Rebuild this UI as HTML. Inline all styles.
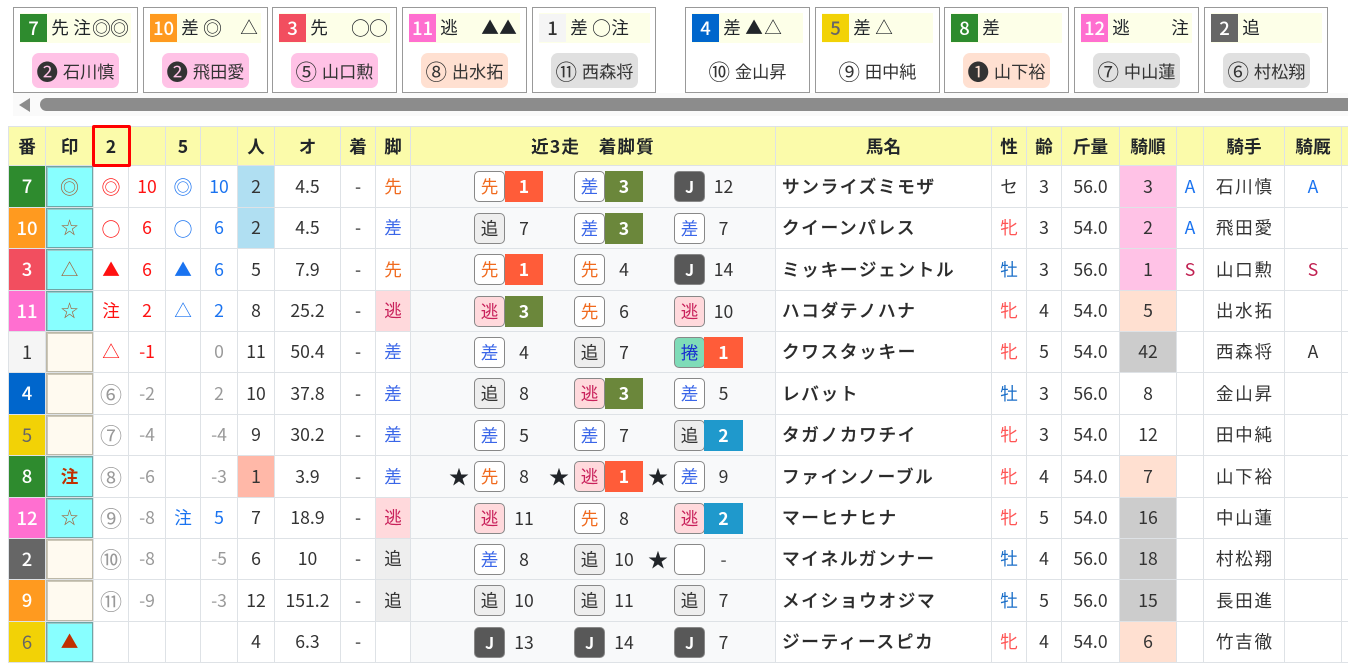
<!DOCTYPE html>
<html lang="ja"><head><meta charset="utf-8"><title>出馬表</title>
<style>
html,body{margin:0;padding:0;width:1348px;height:669px;overflow:hidden;background:#fff;color:#212529;font-family:"Noto Sans CJK JP","Liberation Sans",sans-serif;font-size:17.6px}
.c{position:absolute;top:7px;height:84px;width:123px;border:1px solid #999;background:#fff}
.y{position:absolute;left:6px;top:5px;width:111px;height:30px;background:#fdffe8}
.w{position:absolute;left:6px;top:6px;width:27px;height:28px;line-height:28px;text-align:center;color:#fff;font-size:18.5px;font-weight:500}
.c s{position:absolute;top:6px;text-decoration:none;font-size:17.6px;line-height:28px;width:18px;text-align:center}
.c s.ci{font-size:19px}
.s1{left:37px}.s2{left:59px}.s3{left:78px}.s4{left:96px}
.p{position:absolute;top:45px;height:35px;width:87px;left:18px;border-radius:7px;line-height:35px;text-align:center;font-size:17.2px;white-space:nowrap;color:#333}
.p span{font-size:21.5px;line-height:1;vertical-align:-2px;margin-right:1px}
.k1{background:#ffc2e6}.k2{background:#ffe0d1}.k3{background:#e0e0e0}
#sb{position:absolute;left:13px;top:93px;width:1335px;height:23px;background:#fafafa}
#sb i{position:absolute;left:27px;top:5px;height:13px;width:1320px;background:#8c8c8c;border-radius:7px 0 0 7px}
#sb b{position:absolute;left:6px;top:5px;width:0;height:0;border-top:7px solid transparent;border-bottom:7px solid transparent;border-right:11px solid #8c8c8c}
table{position:absolute;left:8px;top:126px;border-collapse:collapse;table-layout:fixed;width:1392px}
td,th{border:1px solid #dee2e6;padding:0;text-align:center;line-height:1;white-space:nowrap;position:relative;color:#333;font-weight:400}
th{background:#fbfbaa;font-weight:700;color:#212529;height:37px;padding-top:1px;font-size:17.6px}
.n1{background:#f5f5f5;color:#333}.n2{background:#666;color:#fff}.n3{background:#f24e5f;color:#fff}.n4{background:#06c;color:#fff}.n5{background:#f2d206;color:#666}.n6{background:#2e8b2e;color:#fff}.n7{background:#ff9a1f;color:#fff}.n8{background:#ff6fd0;color:#fff}
td.n{font-weight:500;color:#fff;font-size:18.5px}td.n1{color:#333;font-weight:400}td.n5{color:#666;font-weight:400}
.mk div{position:absolute;left:0;right:0;top:0;bottom:0;background:#88ffff;box-shadow:inset 0 0 0 1px #6fa5a5,inset 1px 1px 0 1px #9cc;display:flex;align-items:center;justify-content:center;color:#a0623c}
.mk div.e{background:#fffaf0;box-shadow:inset 0 0 0 1px #bdb8a8,inset 1px 1px 0 1px #ccc7b8}
.mk div.ci{font-size:19px}
td.ci{font-size:19px}
td.cc{font-size:22px}
.r{color:#f11}.bl{color:#1a73f0}.gy{color:#999}
.lf{color:#f06a1e}.lz{color:#3a66e8}.lg{background:#ffd9dc;color:#c8205a}.lt{background:#eee;color:#333}
.pb{background:#b0dff2}.pr{background:#ffb8a8}
.o{background:#f8f9fa}
.b,.h,.q,.st{position:absolute;font-style:normal;text-decoration:none}
.b{top:5px;width:29px;height:29px;border:1px solid #888;border-radius:5px;background:#fff;line-height:29px;text-align:center;font-size:17.6px}
.b.f{color:#f06a1e}.b.z{color:#3a66e8}.b.g{background:#ffd9dc;color:#c8205a}.b.t{background:#eee;color:#333}.b.j{background:#585858;color:#fff;font-weight:700;font-size:16px}.b.m{background:#7fdcb8;color:#1a2fd0}
.a1{left:63px}.a2{left:163px}.a3{left:263px}
.h,.q{top:5px;height:31px;line-height:31px;text-align:center;width:38px;font-size:17.6px}
.u1{left:94px}.u2{left:194px}.u3{left:293px;width:39px}
.h{color:#fff;font-weight:700}.hr{background:#ff5c39}.hg{background:#6b873b}.hb{background:#1f99cc}
.st{top:8px;font-size:20px;line-height:24px;color:#212529;width:22px;text-align:center}
.t1{left:37px}.t2{left:137px}.t3{left:236px}
.nm{text-align:left;padding-left:6px;font-weight:500;letter-spacing:1.7px;font-size:17.6px;color:#2b2b2b;-webkit-text-stroke:.25px #2b2b2b}
.jk{letter-spacing:1.7px;padding-left:1.7px}
.fx{color:#f55}.mx{color:#1a6ec8}
.z1{background:#ffc2e6}.z2{background:#ffe0d1}.z3{background:#ccc}
.ca{color:#1a73f0}.cs{color:#c01f50}
.wd{letter-spacing:1.1px}
#red{position:absolute;left:92px;top:125px;width:33px;height:36px;border:3px solid #f00;border-radius:2px}
</style></head><body>

<div class="c" style="left:13px"><div class="y"></div><div class="w n6">7</div><s class="s1">先</s><s class="s2">注</s><s class="s3 ci">◎</s><s class="s4 ci">◎</s><div class="p k1"><span>❷</span> 石川慎</div></div>
<div class="c" style="left:143px"><div class="y"></div><div class="w n7">10</div><s class="s1">差</s><s class="s2 ci">◎</s><s class="s4">△</s><div class="p k1"><span>❷</span> 飛田愛</div></div>
<div class="c" style="left:272px"><div class="y"></div><div class="w n3">3</div><s class="s1">先</s><s class="s3 ci">○</s><s class="s4 ci">○</s><div class="p k1"><span>⑤</span> 山口勲</div></div>
<div class="c" style="left:402px"><div class="y"></div><div class="w n8">11</div><s class="s1">逃</s><s class="s3">▲</s><s class="s4">▲</s><div class="p k2"><span>⑧</span> 出水拓</div></div>
<div class="c" style="left:532px;width:122px"><div class="y"></div><div class="w n1">1</div><s class="s1">差</s><s class="s2 ci">○</s><s class="s3">注</s><div class="p k3"><span>⑪</span> 西森将</div></div>
<div class="c" style="left:685px"><div class="y"></div><div class="w n4">4</div><s class="s1">差</s><s class="s2">▲</s><s class="s3">△</s><div class="p"><span>⑩</span> 金山昇</div></div>
<div class="c" style="left:815px"><div class="y"></div><div class="w n5">5</div><s class="s1">差</s><s class="s2">△</s><div class="p"><span>⑨</span> 田中純</div></div>
<div class="c" style="left:944px"><div class="y"></div><div class="w n6">8</div><s class="s1">差</s><div class="p k2"><span>❶</span> 山下裕</div></div>
<div class="c" style="left:1074px"><div class="y"></div><div class="w n8">12</div><s class="s1">逃</s><s class="s4">注</s><div class="p k3"><span>⑦</span> 中山蓮</div></div>
<div class="c" style="left:1204px;width:122px"><div class="y"></div><div class="w n2">2</div><s class="s1">追</s><div class="p k3"><span>⑥</span> 村松翔</div></div>

<div id="sb"><b></b><i></i></div>

<table>
<colgroup><col style="width:37px"><col style="width:48px"><col style="width:35px"><col style="width:37px"><col style="width:35px"><col style="width:37px"><col style="width:37px"><col style="width:66px"><col style="width:35px"><col style="width:35px"><col style="width:365px"><col style="width:216px"><col style="width:35px"><col style="width:35px"><col style="width:58px"><col style="width:57px"><col style="width:27px"><col style="width:81px"><col style="width:57px"><col style="width:59px"></colgroup>
<tr><th>番</th><th>印</th><th>2</th><th></th><th>5</th><th></th><th>人</th><th>オ</th><th>着</th><th>脚</th><th class="wd">近3走　着脚質</th><th>馬名</th><th>性</th><th>齢</th><th>斤量</th><th>騎順</th><th></th><th>騎手</th><th>騎厩</th><th></th></tr>

<tr style="height:42px"><td class="n n6">7</td><td class="mk"><div class="ci">◎</div></td><td class="r ci">◎</td><td class="r">10</td><td class="bl ci">◎</td><td class="bl">10</td><td class="pb">2</td><td>4.5</td><td>-</td><td class="lf">先</td><td class="o"><i class="b f a1">先</i><u class="h hr u1">1</u><i class="b z a2">差</i><u class="h hg u2">3</u><i class="b j a3">J</i><u class="q u3">12</u></td><td class="nm">サンライズミモザ</td><td>セ</td><td>3</td><td>56.0</td><td class="z1">3</td><td class="ca">A</td><td class="jk">石川慎</td><td class="ca">A</td><td></td></tr>

<tr style="height:41px"><td class="n n7">10</td><td class="mk"><div>☆</div></td><td class="r ci">○</td><td class="r">6</td><td class="bl ci">○</td><td class="bl">6</td><td class="pb">2</td><td>4.5</td><td>-</td><td class="lz">差</td><td class="o"><i class="b t a1">追</i><u class="q u1">7</u><i class="b z a2">差</i><u class="h hg u2">3</u><i class="b z a3">差</i><u class="q u3">7</u></td><td class="nm">クイーンパレス</td><td class="fx">牝</td><td>3</td><td>54.0</td><td class="z1">2</td><td class="ca">A</td><td class="jk">飛田愛</td><td></td><td></td></tr>

<tr style="height:42px"><td class="n n3">3</td><td class="mk"><div>△</div></td><td class="r">▲</td><td class="r">6</td><td class="bl">▲</td><td class="bl">6</td><td>5</td><td>7.9</td><td>-</td><td class="lf">先</td><td class="o"><i class="b f a1">先</i><u class="h hr u1">1</u><i class="b f a2">先</i><u class="q u2">4</u><i class="b j a3">J</i><u class="q u3">14</u></td><td class="nm">ミッキージェントル</td><td class="mx">牡</td><td>3</td><td>56.0</td><td class="z1">1</td><td class="cs">S</td><td class="jk">山口勲</td><td class="cs">S</td><td></td></tr>

<tr style="height:41px"><td class="n n8">11</td><td class="mk"><div>☆</div></td><td class="r">注</td><td class="r">2</td><td class="bl">△</td><td class="bl">2</td><td>8</td><td>25.2</td><td>-</td><td class="lg">逃</td><td class="o"><i class="b g a1">逃</i><u class="h hg u1">3</u><i class="b f a2">先</i><u class="q u2">6</u><i class="b g a3">逃</i><u class="q u3">10</u></td><td class="nm">ハコダテノハナ</td><td class="fx">牝</td><td>4</td><td>54.0</td><td class="z2">5</td><td></td><td class="jk">出水拓</td><td></td><td></td></tr>

<tr style="height:41px"><td class="n n1">1</td><td class="mk"><div class="e"></div></td><td class="r">△</td><td class="r">-1</td><td></td><td class="gy">0</td><td>11</td><td>50.4</td><td>-</td><td class="lz">差</td><td class="o"><i class="b z a1">差</i><u class="q u1">4</u><i class="b t a2">追</i><u class="q u2">7</u><i class="b m a3">捲</i><u class="h hr u3">1</u></td><td class="nm">クワスタッキー</td><td class="fx">牝</td><td>5</td><td>54.0</td><td class="z3">42</td><td></td><td class="jk">西森将</td><td>A</td><td></td></tr>

<tr style="height:42px"><td class="n n4">4</td><td class="mk"><div class="e"></div></td><td class="gy cc">⑥</td><td class="gy">-2</td><td></td><td class="gy">2</td><td>10</td><td>37.8</td><td>-</td><td class="lz">差</td><td class="o"><i class="b t a1">追</i><u class="q u1">8</u><i class="b g a2">逃</i><u class="h hg u2">3</u><i class="b z a3">差</i><u class="q u3">5</u></td><td class="nm">レバット</td><td class="mx">牡</td><td>3</td><td>56.0</td><td>8</td><td></td><td class="jk">金山昇</td><td></td><td></td></tr>

<tr style="height:41px"><td class="n n5">5</td><td class="mk"><div class="e"></div></td><td class="gy cc">⑦</td><td class="gy">-4</td><td></td><td class="gy">-4</td><td>9</td><td>30.2</td><td>-</td><td class="lz">差</td><td class="o"><i class="b z a1">差</i><u class="q u1">5</u><i class="b z a2">差</i><u class="q u2">7</u><i class="b t a3">追</i><u class="h hb u3">2</u></td><td class="nm">タガノカワチイ</td><td class="fx">牝</td><td>3</td><td>54.0</td><td>12</td><td></td><td class="jk">田中純</td><td></td><td></td></tr>

<tr style="height:42px"><td class="n n6">8</td><td class="mk"><div style="color:#c03000;font-weight:700">注</div></td><td class="gy cc">⑧</td><td class="gy">-6</td><td></td><td class="gy">-3</td><td class="pr">1</td><td>3.9</td><td>-</td><td class="lz">差</td><td class="o"><em class="st t1">★</em><i class="b f a1">先</i><u class="q u1">8</u><em class="st t2">★</em><i class="b g a2">逃</i><u class="h hr u2">1</u><em class="st t3">★</em><i class="b z a3">差</i><u class="q u3">9</u></td><td class="nm">ファインノーブル</td><td class="fx">牝</td><td>4</td><td>54.0</td><td class="z2">7</td><td></td><td class="jk">山下裕</td><td></td><td></td></tr>

<tr style="height:41px"><td class="n n8">12</td><td class="mk"><div>☆</div></td><td class="gy cc">⑨</td><td class="gy">-8</td><td class="bl">注</td><td class="bl">5</td><td>7</td><td>18.9</td><td>-</td><td class="lg">逃</td><td class="o"><i class="b g a1">逃</i><u class="q u1">11</u><i class="b f a2">先</i><u class="q u2">8</u><i class="b g a3">逃</i><u class="h hb u3">2</u></td><td class="nm">マーヒナヒナ</td><td class="fx">牝</td><td>5</td><td>54.0</td><td class="z3">16</td><td></td><td class="jk">中山蓮</td><td></td><td></td></tr>

<tr style="height:41px"><td class="n n2">2</td><td class="mk"><div class="e"></div></td><td class="gy cc">⑩</td><td class="gy">-8</td><td></td><td class="gy">-5</td><td>6</td><td>10</td><td>-</td><td class="lt">追</td><td class="o"><i class="b z a1">差</i><u class="q u1">8</u><i class="b t a2">追</i><u class="q u2">10</u><em class="st t3">★</em><i class="b a3"></i><u class="q u3">-</u></td><td class="nm">マイネルガンナー</td><td class="mx">牡</td><td>4</td><td>56.0</td><td class="z3">18</td><td></td><td class="jk">村松翔</td><td></td><td></td></tr>

<tr style="height:42px"><td class="n n7">9</td><td class="mk"><div class="e"></div></td><td class="gy cc">⑪</td><td class="gy">-9</td><td></td><td class="gy">-3</td><td>12</td><td>151.2</td><td>-</td><td class="lt">追</td><td class="o"><i class="b t a1">追</i><u class="q u1">10</u><i class="b t a2">追</i><u class="q u2">11</u><i class="b t a3">追</i><u class="q u3">7</u></td><td class="nm">メイショウオジマ</td><td class="mx">牡</td><td>5</td><td>56.0</td><td class="z3">15</td><td></td><td class="jk">長田進</td><td></td><td></td></tr>

<tr style="height:41px"><td class="n n5">6</td><td class="mk"><div style="color:#c03000">▲</div></td><td></td><td></td><td></td><td></td><td>4</td><td>6.3</td><td>-</td><td></td><td class="o"><i class="b j a1">J</i><u class="q u1">13</u><i class="b j a2">J</i><u class="q u2">14</u><i class="b j a3">J</i><u class="q u3">7</u></td><td class="nm">ジーティースピカ</td><td class="fx">牝</td><td>4</td><td>54.0</td><td class="z2">6</td><td></td><td class="jk">竹吉徹</td><td></td><td></td></tr>
</table>
<div id="red"></div>
</body></html>
